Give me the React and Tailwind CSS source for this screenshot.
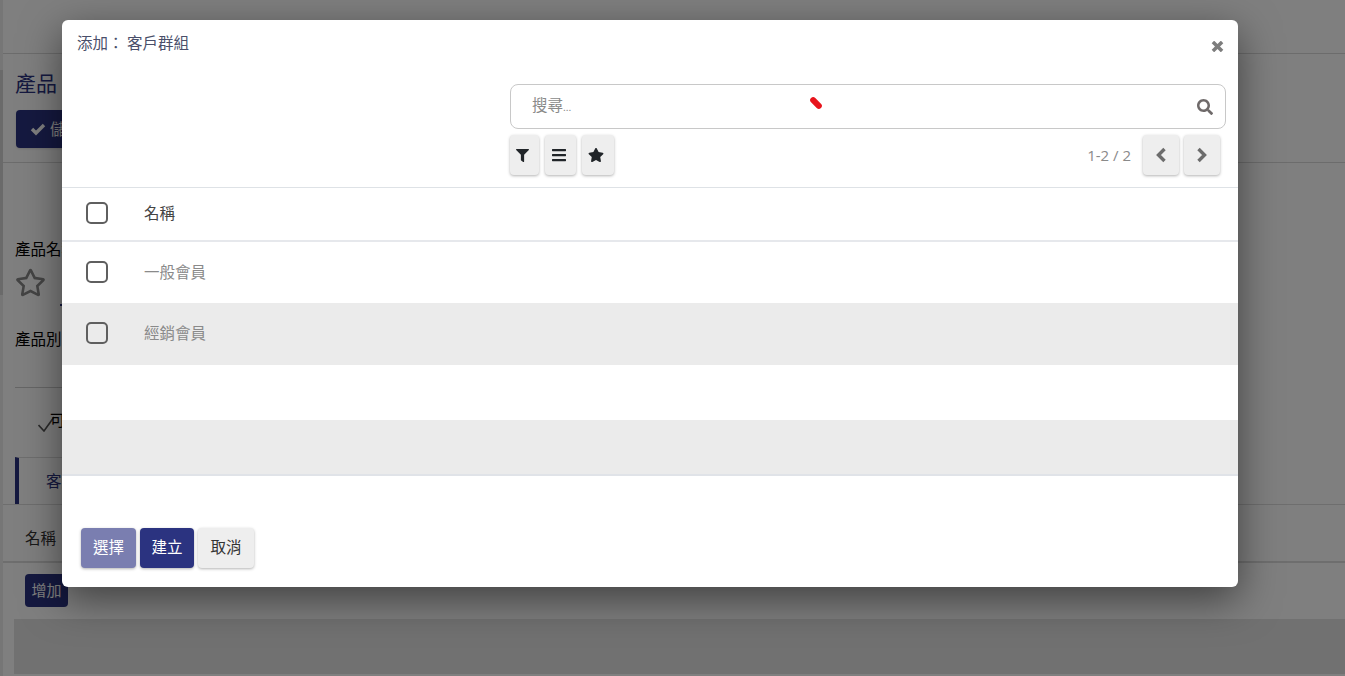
import React from "react";
import { FaRegStar, FaFilter, FaBars, FaStar, FaSearch } from "react-icons/fa";

const font = { fontFamily: '"Noto Sans CJK TC", "Noto Sans", sans-serif' };

// chunky strokes, the packaged icons are thinner than the ones in the picture
const Check = ({ className }) => (
  <svg viewBox="0 0 16 14" className={className} fill="none" stroke="currentColor" strokeWidth="3.4">
    <polyline points="2,7 6,11 14,3" />
  </svg>
);

const Cross = ({ className }) => (
  <svg viewBox="0 0 14 12" className={className} fill="none" stroke="currentColor" strokeWidth="3.8">
    <path d="M2 1 L12 11 M12 1 L2 11" />
  </svg>
);

const Chevron = ({ points }) => (
  <svg viewBox="0 0 12 16" className="w-[12px] h-[16px]" fill="none" stroke="currentColor" strokeWidth="3.4">
    <polyline points={points} />
  </svg>
);

// the page sitting behind the dialog
const BackPage = () => (
  <div className="h-[676px] overflow-hidden bg-white flex">
    <div className="w-[3px] bg-[#ededed] shrink-0">
      <div className="mt-[70px] h-[225px] bg-[#d4d4d4]" />
    </div>
    <div className="flex-1">
      <div className="h-[54px] border-b border-[#d8d8d8]" />
      <div className="h-[109px] border-b border-[#d8d8d8] pl-[12px] pt-[14px]">
        <div className="text-[21px] leading-[28px] text-[#2b3380]">產品</div>
        <div className="ml-px mt-[14px] h-[38px] w-[120px] rounded bg-[#2b3380] text-white text-[15.5px] flex items-center gap-[4px] pl-[14px] shadow">
          <Check className="w-[16px] h-[14px]" />
          <span>儲存</span>
        </div>
      </div>
      <div className="pl-[12px]">
        <div className="pt-[74px] text-[15.5px] leading-[22px] text-black">產品名稱</div>
        <FaRegStar className="mt-[8px] text-[31px] text-[#888]" />
        <div className="ml-[45px] mt-[6px] h-[2px] w-[200px] bg-[#2b3380]" />
        <div className="mt-[21px] text-[15.5px] leading-[22px] text-black">產品別</div>
        <div className="mt-[38px] h-px w-[1200px] bg-[#ccc]" />
      </div>
      <div className="h-[69px] pl-[35px] pt-[21px] flex items-start text-[15.5px] leading-[20px] text-black">
        <svg viewBox="0 0 16 16" className="mt-[7px] w-[16px] h-[16px] -mr-[4px] text-[#555]" fill="none" stroke="currentColor" strokeWidth="1.6">
          <polyline points="0.5,9 6,15 16,1" />
        </svg>
        <span>可</span>
      </div>
      <div className="border-b border-[#ddd]">
        <div className="ml-[12px] h-[47px] w-[200px] border-l-4 border-t border-l-[#2b3380] border-t-[#ddd] pl-[27px] pt-[11px] text-[15.5px] text-[#2b3380]">客戶群組</div>
      </div>
      <div className="h-[58px] pt-[10px] border-b-2 border-[#ddd] pl-[22px] flex items-center text-[15.5px] text-[#333]">名稱</div>
      <div className="h-[56px] pl-[22px] pt-[11px]">
        <div className="w-[43px] h-[33px] rounded bg-[#2b3380] text-white text-[15px] flex items-center justify-center">增加</div>
      </div>
      <div className="ml-[11px] h-[55px] bg-[#e2e2e2]" />
    </div>
  </div>
);

const ToolButton = ({ className, children }) => (
  <button className={`h-[40px] rounded bg-[#eeeeee] flex items-center justify-center shadow-[0_1px_3px_rgba(0,0,0,0.3)] ${className}`}>
    {children}
  </button>
);

const Box = () => <div className="w-[22px] h-[22px] rounded-[5px] border-2 border-[#5f5f5f]" />;

const Row = ({ label, className = "" }) => (
  <div className={`flex items-center pl-[24px] pb-[2px] ${className}`}>
    <Box />
    <span className="ml-[36px] text-[15.5px] text-[#8a8a8a]">{label}</span>
  </div>
);

const Dialog = () => (
  <div className="absolute left-[62px] top-[20px] w-[1176px] h-[567px] bg-white rounded-md shadow-[0_12px_40px_rgba(0,0,0,0.5)]">
    <div className="h-[64px] flex justify-between pl-[15px] pr-[14px]">
      <div className="pt-[11px] text-[15.5px] leading-[22px] text-[#4a4f6a]">添加： 客戶群組</div>
      <Cross className="mt-[21px] w-[13px] h-[11px] text-[#7d7d7d]" />
    </div>

    <div className="h-[104px] relative border-b border-[#dee2e6]">
      <div className="ml-[448px] mr-[12px] h-[45px] rounded-lg border border-[#c8c8c8] flex items-center justify-between pl-[21px] pr-[12px]">
        <span className="text-[15.5px] leading-[20px] text-[#8a8a8a] -mt-[2px]">搜尋<span className="text-[10px]">...</span></span>
        <FaSearch className="text-[16px] text-[#6f6a6a]" />
      </div>
      <div className="mt-[6px] ml-[448px] mr-[18px] flex items-center text-[#212529]">
        <ToolButton className="w-[29px]"><FaFilter className="text-[13px] mr-[4px]" /></ToolButton>
        <ToolButton className="w-[31px] ml-[6px]"><FaBars className="text-[16px] mr-[4px]" /></ToolButton>
        <ToolButton className="w-[32px] ml-[6px]"><FaStar className="text-[16px] mr-[5px]" /></ToolButton>
        <span className="ml-auto text-[15px] text-[#8a8a8a]" style={{ fontFamily: '"Open Sans", sans-serif' }}>1-2 / 2</span>
        <ToolButton className="w-[36px] ml-[12px] text-[#6c6c6c]"><Chevron points="9.5,2 3.5,8 9.5,14" /></ToolButton>
        <ToolButton className="w-[36px] ml-[5px] text-[#6c6c6c]"><Chevron points="2.5,2 8.5,8 2.5,14" /></ToolButton>
      </div>
      {/* stray red mark over the search box */}
      <div className="absolute left-[747px] top-[16px] w-[14px] h-[6px] rounded-full bg-[#e8141c] rotate-45" />
    </div>

    <div className="h-[54px] flex items-center pl-[24px] pb-[2px] border-b-2 border-[#e6e8ec]">
      <Box />
      <span className="ml-[36px] text-[15.5px] text-[#444]">名稱</span>
    </div>
    <Row label="一般會員" className="h-[61px]" />
    <Row label="經銷會員" className="h-[62px] bg-[#ebebeb]" />
    <div className="h-[55px]" />
    <div className="h-[56px] bg-[#ebebeb] border-b-2 border-[#e0e3e8]" />

    <div className="pl-[19px] pt-[52px] flex gap-[4px] text-[15.5px]">
      <button className="w-[55px] h-[40px] pb-[2px] rounded bg-[#7a7eb0] text-white shadow-[0_1px_3px_rgba(0,0,0,0.3)]">選擇</button>
      <button className="w-[54px] h-[40px] pb-[2px] rounded bg-[#2b3380] text-white shadow-[0_1px_3px_rgba(0,0,0,0.3)]">建立</button>
      <button className="w-[56px] h-[40px] pb-[2px] rounded bg-[#eeeeee] text-[#333] shadow-[0_1px_3px_rgba(0,0,0,0.3)]">取消</button>
    </div>
  </div>
);

export default function App() {
  return (
    <div className="relative h-[676px] overflow-hidden" style={font}>
      <BackPage />
      <div className="absolute inset-0 bg-black/50" />
      <Dialog />
    </div>
  );
}
